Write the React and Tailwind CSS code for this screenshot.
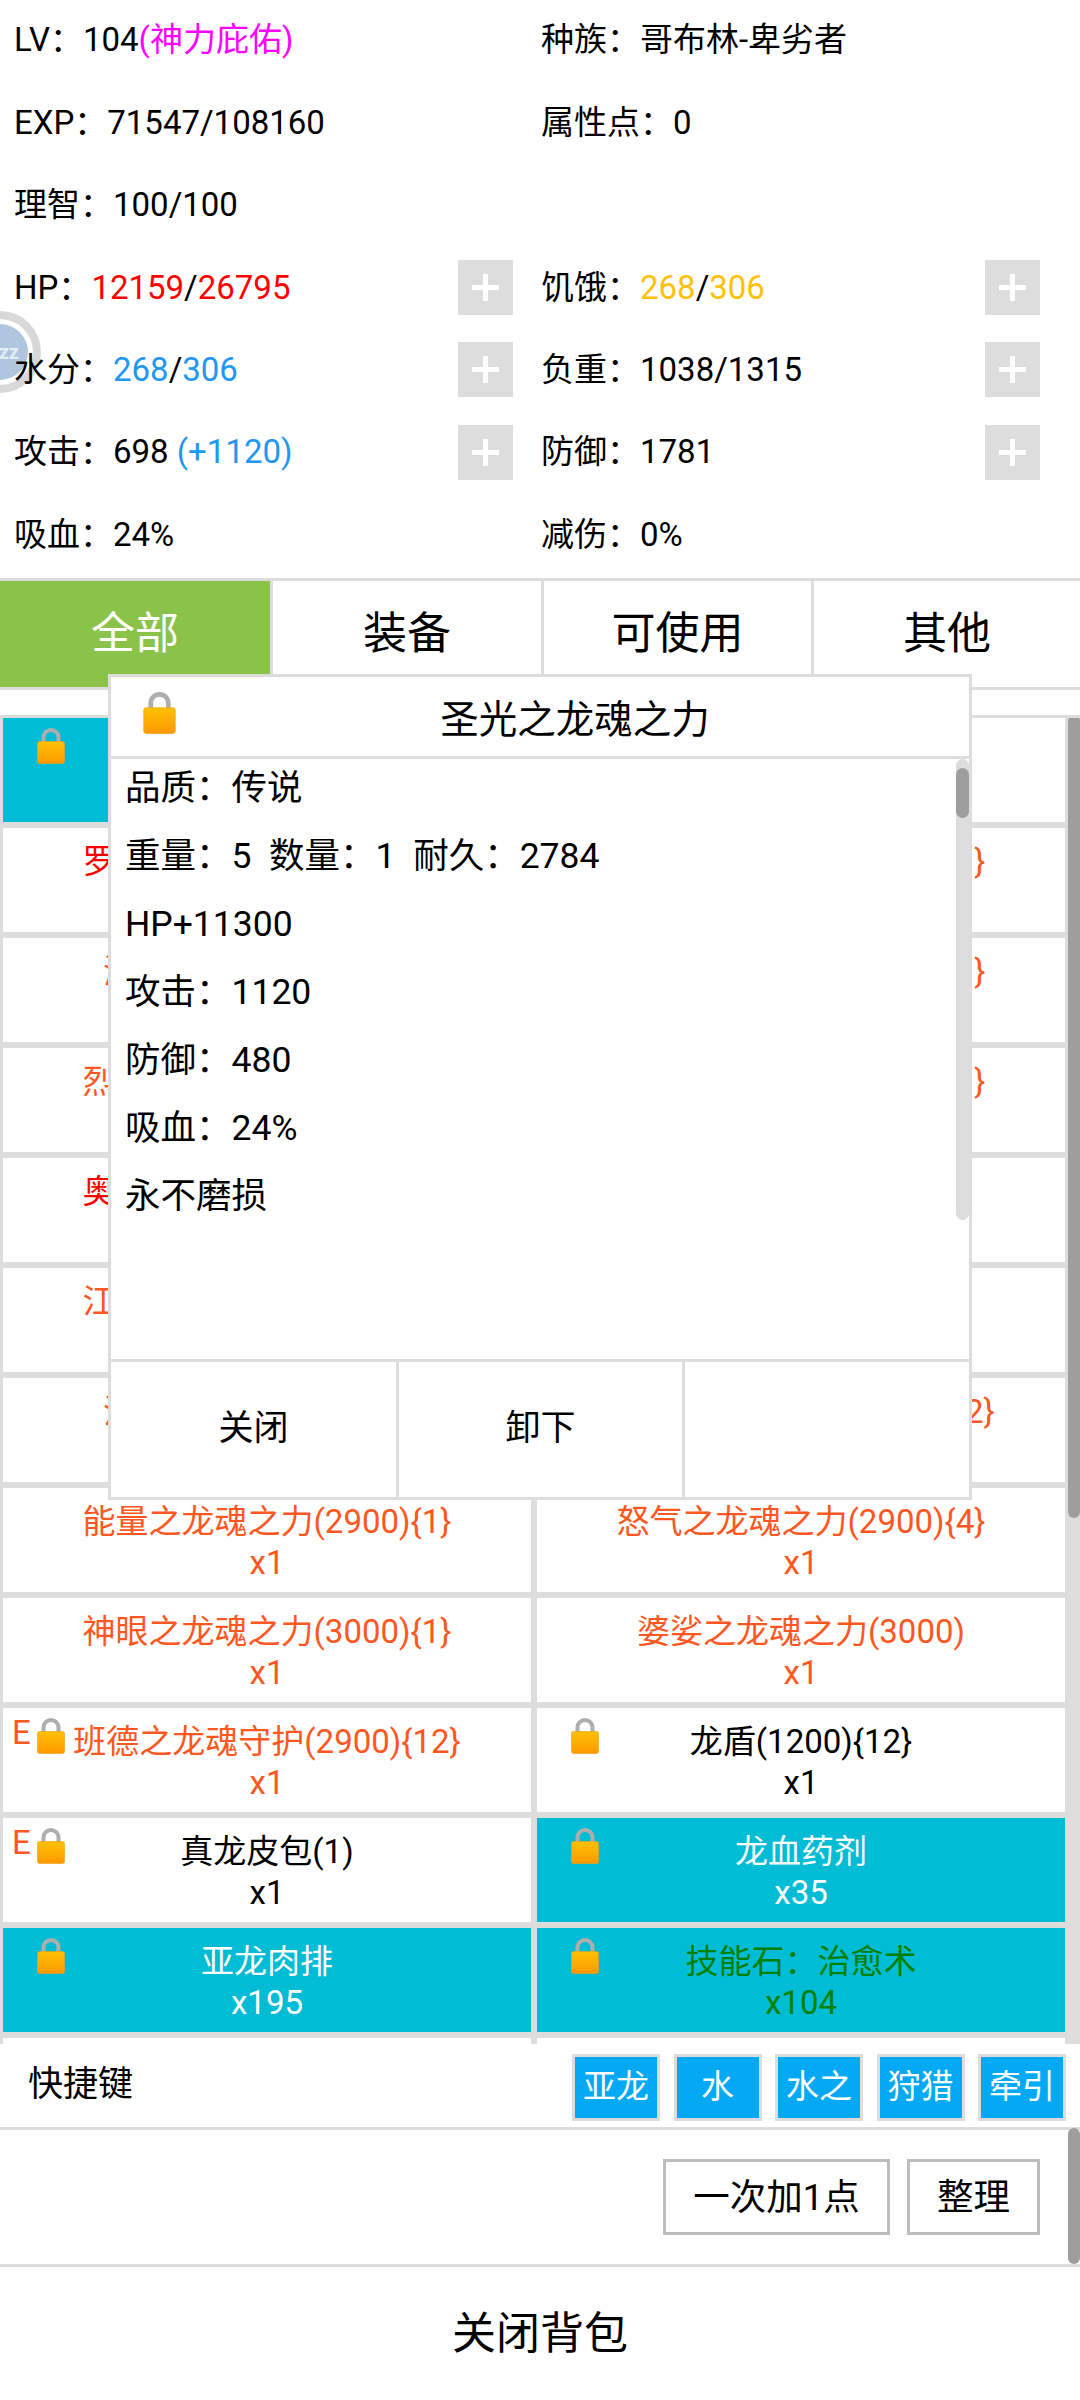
import React from 'react';

const ORANGE = 'text-[#ff5722]';
const RED = 'text-[#ff0000]';

const items = [
    { name: '', qty: '', lock: true, bg: true },
    { name: '神力之龙魂之力(2900)', qty: 'x1', color: ORANGE },
    { name: '罗刹之龙魂之力(2900){1}', qty: 'x1', color: RED },
    { name: '力量之龙魂之力(2900){1}', qty: 'x1', color: ORANGE },
    { name: '海洋之龙魂之力(2900)', qty: 'x1', color: ORANGE },
    { name: '敏捷之龙魂之力(2900){1}', qty: 'x1', color: ORANGE },
    { name: '烈焰之龙魂之力(2900){1}', qty: 'x1', color: ORANGE },
    { name: '坚韧之龙魂之力(2900){1}', qty: 'x1', color: ORANGE },
    { name: '奥术之龙魂之力(2900){1}', qty: 'x1', color: RED },
    { name: '智慧之龙魂之力(2900)', qty: 'x1', color: ORANGE },
    { name: '江河之龙魂之力(2900){1}', qty: 'x1', color: ORANGE },
    { name: '生命之龙魂之力(2900)', qty: 'x1', color: ORANGE },
    { name: '沧澜之龙魂之力(2900)', qty: 'x1', color: ORANGE },
    { name: '守护之龙魂之力(2900){12}', qty: 'x1', color: ORANGE },
    { name: '能量之龙魂之力(2900){1}', qty: 'x1', color: ORANGE },
    { name: '怒气之龙魂之力(2900){4}', qty: 'x1', color: ORANGE },
    { name: '神眼之龙魂之力(3000){1}', qty: 'x1', color: ORANGE },
    { name: '婆娑之龙魂之力(3000)', qty: 'x1', color: ORANGE },
    { name: '班德之龙魂守护(2900){12}', qty: 'x1', color: ORANGE, lock: true, equipped: true },
    { name: '龙盾(1200){12}', qty: 'x1', color: 'text-black', lock: true },
    { name: '真龙皮包(1)', qty: 'x1', color: 'text-black', lock: true, equipped: true },
    { name: '龙血药剂', qty: 'x35', color: 'text-white', lock: true, bg: true },
    { name: '亚龙肉排', qty: 'x195', color: 'text-white', lock: true, bg: true },
    { name: '技能石：治愈术', qty: 'x104', color: 'text-[#008000]', lock: true, bg: true },
    { name: '', qty: '' },
    { name: '', qty: '' },
];

const LockIcon = ({ className, id }) => (
    <svg viewBox="0 0 28 36" className={className}>
        <defs>
            <linearGradient id={id} x1="0" y1="0" x2="0" y2="1">
                <stop offset="0" stopColor="#ffc107" />
                <stop offset="1" stopColor="#ff9800" />
            </linearGradient>
        </defs>
        <path d="M6.5 15V9.5a7.5 7.5 0 0 1 15 0V15" fill="none" stroke="#aeaeae" strokeWidth="4" />
        <rect x="0.5" y="13.5" width="27" height="22" rx="2" fill={`url(#${id})`} stroke="#f0a010" strokeWidth="0.6" />
    </svg>
);

const PlusButton = () => (
    <div className="w-[55px] h-[55px] bg-[#dddddd] flex items-center justify-center shrink-0">
        <svg viewBox="0 0 27 27" className="w-[27px] h-[27px]">
            <rect x="11" y="0" width="5" height="27" fill="#ffffff" />
            <rect x="0" y="11" width="27" height="5" fill="#ffffff" />
        </svg>
    </div>
);

const StatRow = ({ left, right, plus }) => (
    <div className="h-[82.4px] grid grid-cols-[526px_1fr] items-center">
        <div className="flex items-center pl-[14px] pr-[13px] justify-between whitespace-pre">
            <span>{left}</span>
            {plus && <PlusButton />}
        </div>
        <div className="flex items-center pl-[15px] pr-[40px] justify-between whitespace-pre">
            <span>{right}</span>
            {plus && <PlusButton />}
        </div>
    </div>
);

const ItemCell = ({ item, index }) => (
    <div className={`relative h-[104px] pt-[13px] text-center text-[33px] leading-[41px] ${item.bg ? 'bg-[#00bcd4]' : 'bg-white'} ${item.color || ''}`}>
        {item.equipped && <span className="absolute left-[9px] top-[4px] text-[#ff5722]">E</span>}
        {item.lock && <LockIcon id={`lock-${index}`} className="absolute left-[34px] top-[10px] w-[28px] h-[36px]" />}
        <div className="whitespace-nowrap">{item.name}</div>
        <div>{item.qty}</div>
    </div>
);

const Tab = ({ className, active, children }) => (
    <div className={`h-full flex items-center justify-center text-[44px] ${active ? 'bg-[#8bc34a] text-white' : ''} ${className}`}>
        {children}
    </div>
);

const QuickKey = ({ children }) => (
    <div className="w-[88px] h-[67px] border-[3px] border-[#dddddd] bg-[#03a9f4] text-white text-[33px] flex items-center justify-center whitespace-nowrap">
        {children}
    </div>
);

const ItemDialog = () => (
    <div className="absolute left-[108px] top-[674px] w-[864px] h-[826px] border-[3px] border-[#dddddd] bg-white flex flex-col z-20">
        <div className="relative h-[82px] shrink-0 border-b-[3px] border-[#dddddd] flex items-center justify-center pl-[70px] pt-[6px] text-[38.5px]">
            <LockIcon id="lock-dialog" className="absolute left-[32px] top-[15px] w-[33px] h-[42px]" />
            圣光之龙魂之力
        </div>
        <div className="relative h-[600px] shrink-0 overflow-hidden pl-[14px] text-[35.5px] leading-[68px] whitespace-pre">
            <div className="-mt-[5px]">
                <div>品质：传说</div>
                <div>重量：5  数量：1  耐久：2784</div>
                <div>HP+11300</div>
                <div>攻击：1120</div>
                <div>防御：480</div>
                <div>吸血：24%</div>
                <div>永不磨损</div>
            </div>
            <div className="absolute right-0 top-0 w-[13px] h-[461px] bg-[#dddddd] rounded-full">
                <div className="mt-[9px] w-full h-[50px] rounded-full bg-[#9e9e9e]" />
            </div>
        </div>
        <div className="flex-1 grid grid-cols-[288px_286px_1fr] border-t-[3px] border-[#dddddd] text-[35px]">
            <div className="flex items-center justify-center border-r-[3px] border-[#dddddd]">关闭</div>
            <div className="flex items-center justify-center border-r-[3px] border-[#dddddd]">卸下</div>
            <div />
        </div>
    </div>
);

const App = () => (
    <div className="relative w-[1080px] h-[2400px] overflow-hidden bg-white text-black flex flex-col font-[Roboto,'Noto_Sans_CJK_SC',sans-serif]">
        {/* floating sleep button, half off screen */}
        <div className="absolute -left-[41px] top-[311px] w-[82px] h-[82px] rounded-full bg-[#d8d8d8] flex items-center justify-center">
            <div className="w-[66px] h-[66px] rounded-full bg-white flex items-center justify-center">
                <div className="w-[56px] h-[56px] rounded-full bg-[#aec6de] text-white/70 text-[20px] leading-[20px] font-bold flex items-center justify-end pr-[9px]">
                    zz
                </div>
            </div>
        </div>

        <div className="relative h-[578px] shrink-0 text-[33px] -mt-[1px] pb-[1px]">
            <StatRow
                left={<>LV：104<span className="text-[#ff00ff]">(神力庇佑)</span></>}
                right="种族：哥布林-卑劣者"
            />
            <StatRow left="EXP：71547/108160" right="属性点：0" />
            <StatRow left="理智：100/100" />
            <StatRow
                plus
                left={<>HP：<span className="text-[#ff0000]">12159</span>/<span className="text-[#ff0000]">26795</span></>}
                right={<>饥饿：<span className="text-[#ffc107]">268</span>/<span className="text-[#ffc107]">306</span></>}
            />
            <StatRow
                plus
                left={<>水分：<span className="text-[#2196f3]">268</span>/<span className="text-[#2196f3]">306</span></>}
                right="负重：1038/1315"
            />
            <StatRow
                plus
                left={<>攻击：698 <span className="text-[#2196f3]">(+1120)</span></>}
                right="防御：1781"
            />
            <StatRow left="吸血：24%" right="减伤：0%" />
        </div>

        <div className="h-[112px] shrink-0 mt-[1px] border-y-[3px] border-[#dddddd] flex">
            <Tab active className="w-[273px] border-r-[3px] border-[#dddddd]">全部</Tab>
            <Tab className="w-[271px] border-r-[3px] border-[#dddddd]">装备</Tab>
            <Tab className="w-[270px] border-r-[3px] border-[#dddddd]">可使用</Tab>
            <Tab className="flex-1">其他</Tab>
        </div>

        <div className="h-[25px] shrink-0" />

        <div className="relative h-[1329px] shrink-0 overflow-hidden bg-[#dddddd] border-t-[3px] border-[#dddddd] pl-[3px]">
            <div className="w-[1062px] grid grid-cols-2 gap-[6px]">
                {items.map((item, i) => (
                    <ItemCell key={i} item={item} index={i} />
                ))}
            </div>
            <div className="absolute right-0 -top-[3px] w-[12px] h-[803px] rounded-full bg-[#9e9e9e]" />
        </div>

        <div className="h-[86px] shrink-0 border-b-[3px] border-[#dddddd] flex items-center justify-between pl-[28px] pr-[14px]">
            <span className="text-[35px]">快捷键</span>
            <div className="flex gap-[13.5px] mt-[3px]">
                <QuickKey>亚龙</QuickKey>
                <QuickKey>水</QuickKey>
                <QuickKey>水之</QuickKey>
                <QuickKey>狩猎</QuickKey>
                <QuickKey>牵引</QuickKey>
            </div>
        </div>

        <div className="relative h-[137px] shrink-0 border-b-[3px] border-[#dddddd] flex items-center justify-end gap-[17px] pr-[40px] text-[36.5px]">
            <div className="w-[227px] h-[76px] pt-[3px] border-[3px] border-[#bdbdbd] flex items-center justify-center">一次加1点</div>
            <div className="w-[133px] h-[76px] pt-[3px] border-[3px] border-[#bdbdbd] flex items-center justify-center">整理</div>
            <div className="absolute right-0 -top-[2px] w-[12px] h-[136px] rounded-full bg-[#9e9e9e]" />
        </div>

        <div className="flex-1 flex items-center justify-center text-[44px]">关闭背包</div>

        <ItemDialog />
    </div>
);

export default App;
